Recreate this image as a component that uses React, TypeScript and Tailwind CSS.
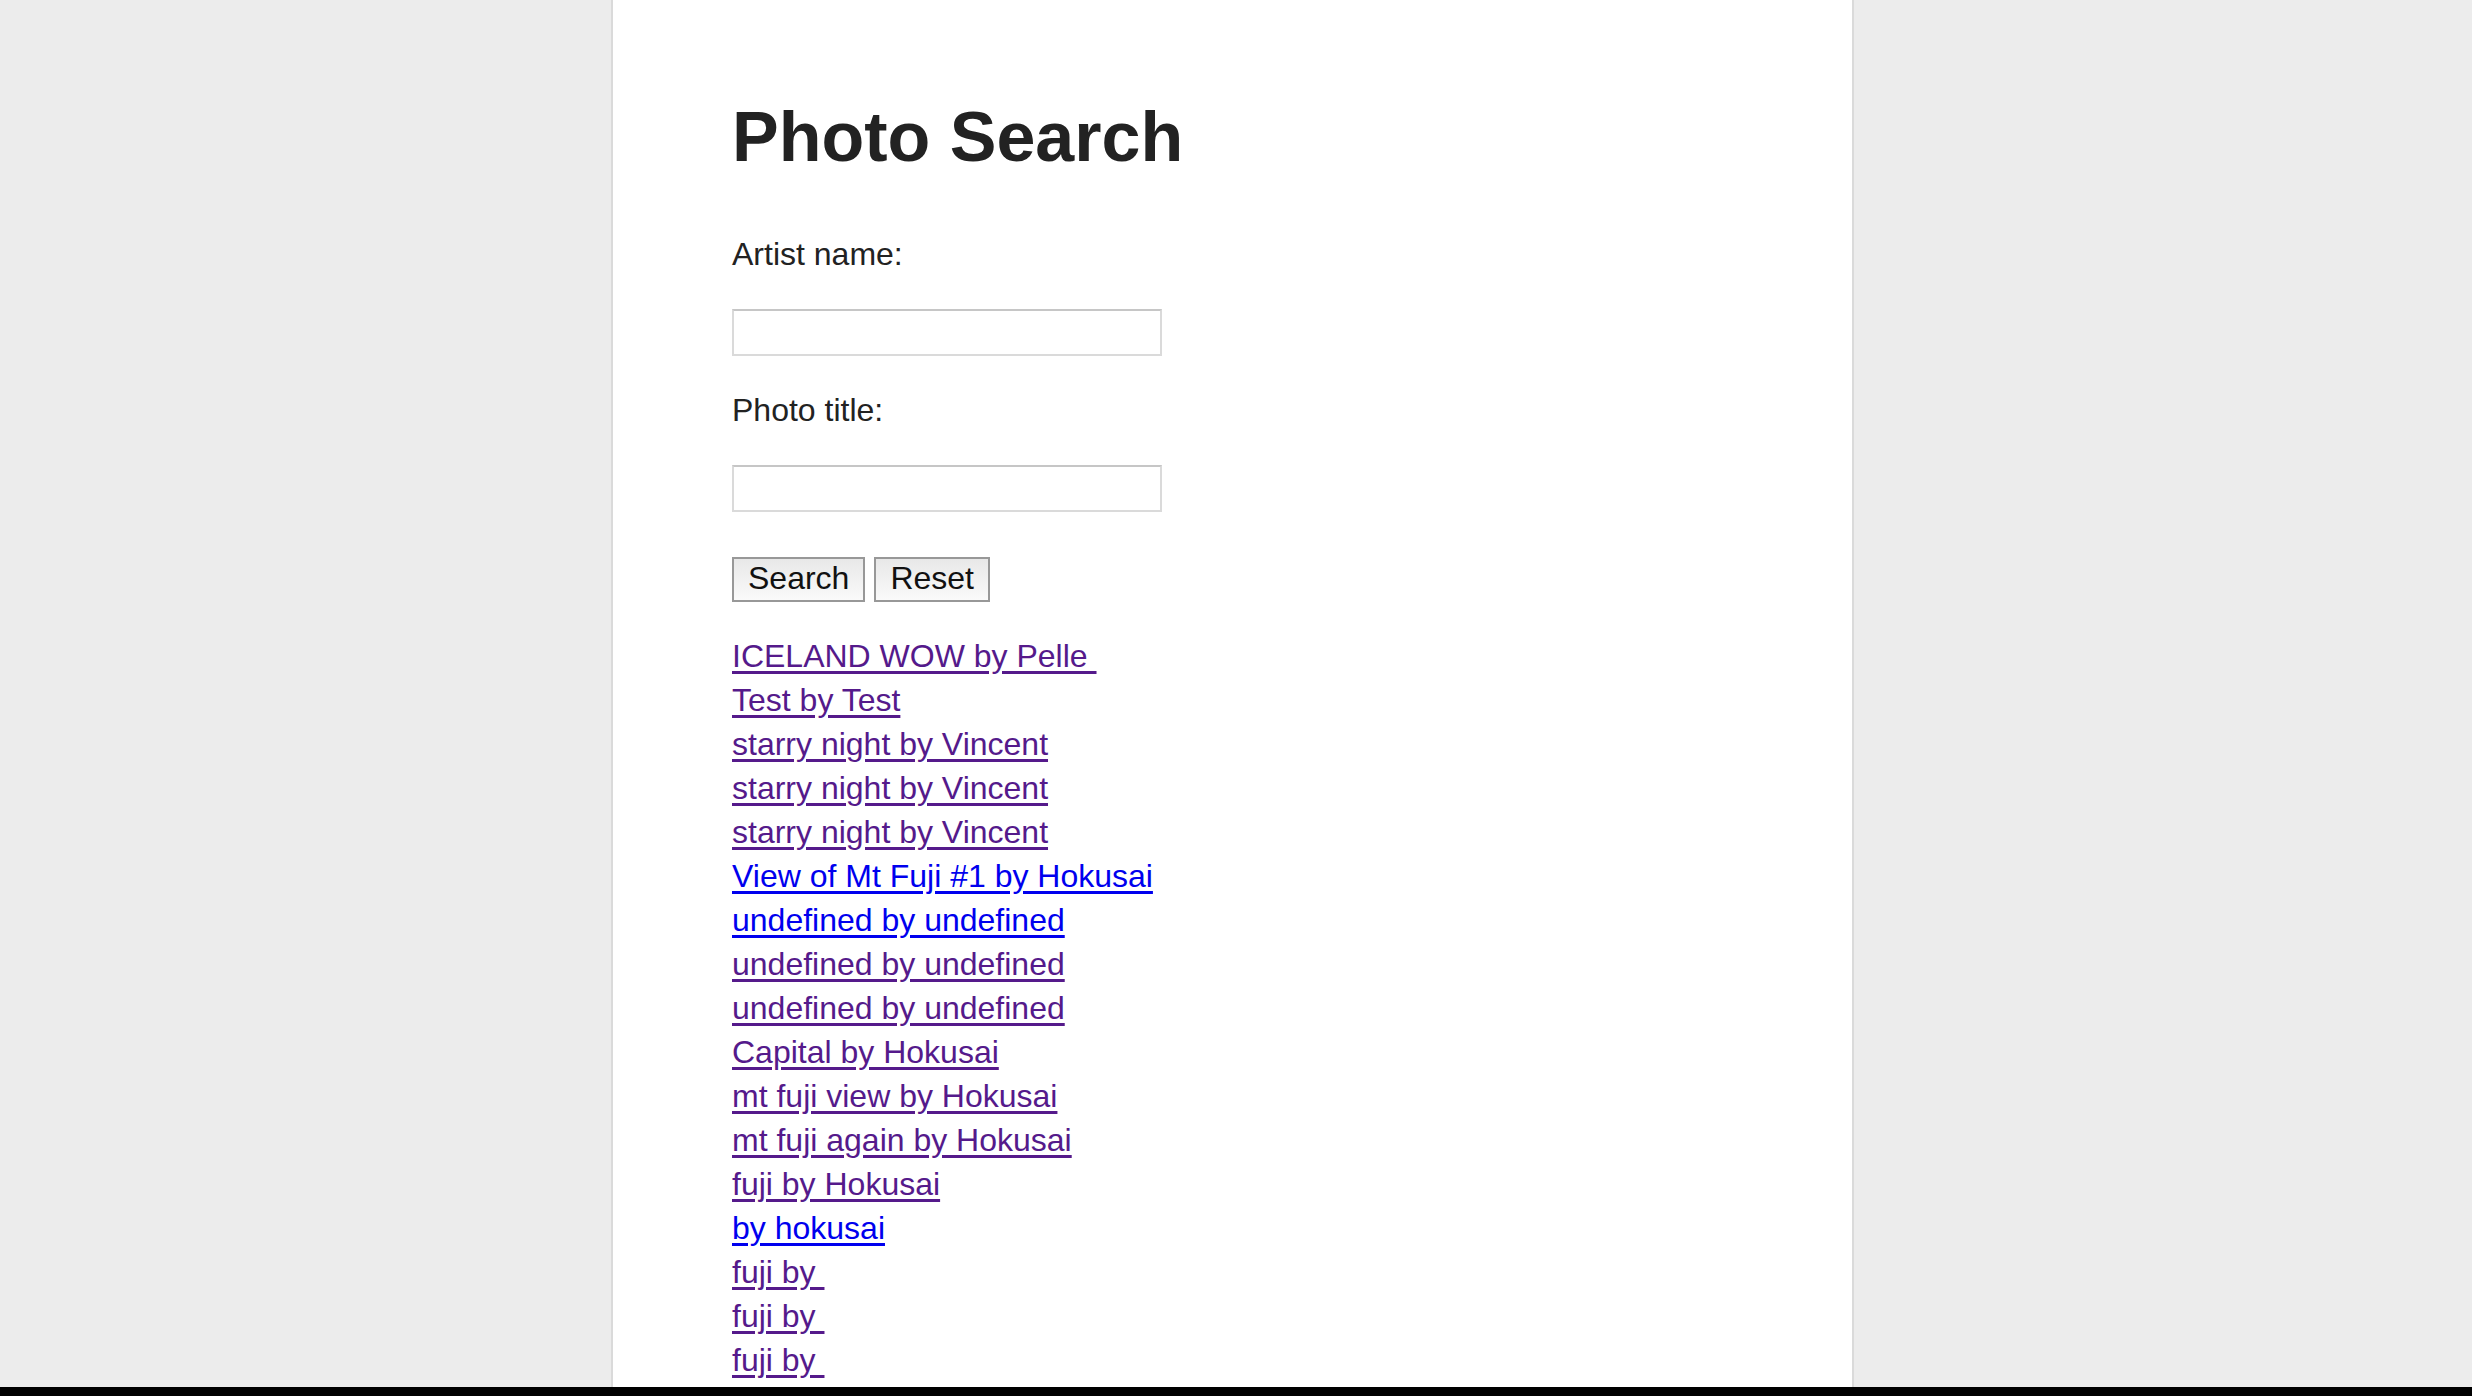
import { useState } from 'react';

type Photo = {
  label: string;
  visited: boolean;
};

const photos: Photo[] = [
  { label: 'ICELAND WOW by Pelle ', visited: true },
  { label: 'Test by Test', visited: true },
  { label: 'starry night by Vincent', visited: true },
  { label: 'starry night by Vincent', visited: true },
  { label: 'starry night by Vincent', visited: true },
  { label: 'View of Mt Fuji #1 by Hokusai', visited: false },
  { label: 'undefined by undefined', visited: false },
  { label: 'undefined by undefined', visited: true },
  { label: 'undefined by undefined', visited: true },
  { label: 'Capital by Hokusai', visited: true },
  { label: 'mt fuji view by Hokusai', visited: true },
  { label: 'mt fuji again by Hokusai', visited: true },
  { label: 'fuji by Hokusai', visited: true },
  { label: 'by hokusai', visited: false },
  { label: 'fuji by ', visited: true },
  { label: 'fuji by ', visited: true },
  { label: 'fuji by ', visited: true },
];

export default function App() {
  const [artist, setArtist] = useState('');
  const [title, setTitle] = useState('');

  return (
    <div className="min-h-screen bg-[#ececec] font-['Liberation_Sans',Arial,sans-serif] text-[#222]">
      <div className="ml-[611px] w-[1243px] min-h-screen bg-white border-x-2 border-[#dadada] pl-[119px] pt-[97px] pb-10">
        <h1 className="text-[70px] leading-[80px] font-bold text-[#222]">Photo Search</h1>

        <form
          className="flex flex-col items-start"
          onSubmit={(e) => e.preventDefault()}
        >
          <label className="mt-[55px] text-[32px] leading-[44px]">Artist name:</label>
          <input
            type="text"
            value={artist}
            onChange={(e) => setArtist(e.target.value)}
            className="mt-[33px] w-[430px] h-[47px] bg-white border-2 border-[#dadada] border-t-[#c6c6c6] px-2 text-[28px] outline-none"
          />

          <label className="mt-[32px] text-[32px] leading-[44px]">Photo title:</label>
          <input
            type="text"
            value={title}
            onChange={(e) => setTitle(e.target.value)}
            className="mt-[33px] w-[430px] h-[47px] bg-white border-2 border-[#dadada] border-t-[#c6c6c6] px-2 text-[28px] outline-none"
          />

          <div className="mt-[45px] flex gap-[9px]">
            <button
              type="submit"
              className="h-[45px] px-[14px] pb-[3px] border-2 border-[#989898] bg-linear-to-b from-[#e8e8e8] to-[#fafafa] text-[32px] leading-none text-[#111]"
            >
              Search
            </button>
            <button
              type="button"
              onClick={() => {
                setArtist('');
                setTitle('');
              }}
              className="h-[45px] px-[14px] pb-[3px] border-2 border-[#989898] bg-linear-to-b from-[#e8e8e8] to-[#fafafa] text-[32px] leading-none text-[#111]"
            >
              Reset
            </button>
          </div>
        </form>

        <ul className="mt-[32px] text-[32px] leading-[44px]">
          {photos.map((p, i) => (
            <li key={i}>
              <a
                href="#"
                className={
                  p.visited
                    ? 'whitespace-pre underline underline-offset-[4px] text-[#551a8b]'
                    : 'whitespace-pre underline underline-offset-[4px] text-[#0000ee]'
                }
              >
                {p.label}
              </a>
            </li>
          ))}
        </ul>
      </div>

      <div className="fixed bottom-0 left-0 right-0 h-[9px] bg-black" />
    </div>
  );
}
